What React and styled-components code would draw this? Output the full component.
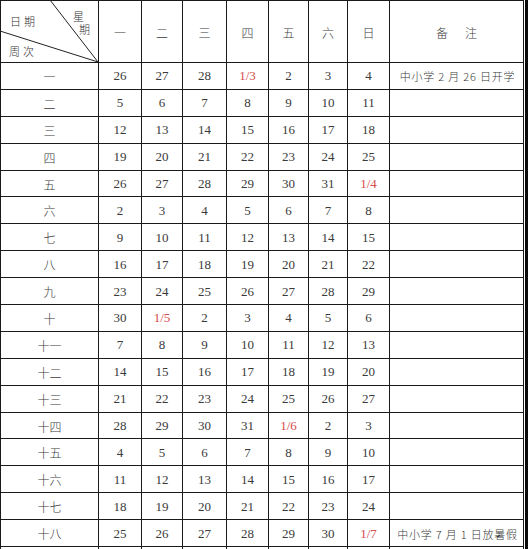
import React from "react";
import styled, { createGlobalStyle } from "styled-components";

const GlobalStyle = createGlobalStyle`
  html, body {
    margin: 0;
    padding: 0;
    background: #fff;
    overflow: hidden;
  }
`;

const Page = styled.div`
  display: flex;
  width: 528px;
  height: 549px;
  overflow: hidden;
`;

const Sheet = styled.div`
  display: grid;
  grid-template-columns: 98px 43px 41px 44px 42px 40px 39px 42px 134px;
  grid-template-rows: 62px;
  grid-auto-rows: 26.9px;
  border-left: 1px solid #1a1a1a;
  border-top: 1px solid #1a1a1a;
  align-self: flex-start;
`;

const Edge = styled.div`
  width: 3px;
  margin-left: 1px;
  background: #0a0a0a;
`;

const Cell = styled.div`
  box-sizing: border-box;
  border-right: 1px solid #1a1a1a;
  border-bottom: 1px solid #1a1a1a;
  display: flex;
  align-items: center;
  justify-content: center;
  font-family: ${({ $num }) =>
    $num
      ? '"Liberation Serif", "Noto Sans CJK SC", serif'
      : '"Noto Sans CJK SC", sans-serif'};
  font-size: ${({ $num }) => ($num ? "13px" : "12px")};
  font-weight: 300;
  color: ${({ $red }) => ($red ? "#d64b4b" : "#3a3a3a")};
  padding-top: 1px;
`;

const Note = styled(Cell)`
  font-family: "Noto Sans CJK SC", sans-serif;
  font-size: 11px;
  letter-spacing: 0.8px;
  white-space: pre;
  padding-left: 2px;
`;

const NoteHead = styled(Cell)`
  gap: 17px;
`;

const Corner = styled.div`
  position: relative;
  box-sizing: border-box;
  border-right: 1px solid #1a1a1a;
  border-bottom: 1px solid #1a1a1a;
  font-family: "Noto Sans CJK SC", sans-serif;
  font-size: 11px;
  font-weight: 300;
  color: #333;
`;

const Diagonals = styled.svg`
  position: absolute;
  left: 0;
  top: 0;
  overflow: visible;
`;

const CornerLabel = styled.span`
  position: absolute;
  left: ${({ $x }) => $x}px;
  top: ${({ $y }) => $y}px;
  letter-spacing: ${({ $spread }) => $spread || 0}px;
  line-height: 12px;
`;

const days = ["一", "二", "三", "四", "五", "六", "日"];

const weeks = [
  ["一", [26, 27, 28, "1/3", 2, 3, 4], "中小学 2 月 26 日开学"],
  ["二", [5, 6, 7, 8, 9, 10, 11]],
  ["三", [12, 13, 14, 15, 16, 17, 18]],
  ["四", [19, 20, 21, 22, 23, 24, 25]],
  ["五", [26, 27, 28, 29, 30, 31, "1/4"]],
  ["六", [2, 3, 4, 5, 6, 7, 8]],
  ["七", [9, 10, 11, 12, 13, 14, 15]],
  ["八", [16, 17, 18, 19, 20, 21, 22]],
  ["九", [23, 24, 25, 26, 27, 28, 29]],
  ["十", [30, "1/5", 2, 3, 4, 5, 6]],
  ["十一", [7, 8, 9, 10, 11, 12, 13]],
  ["十二", [14, 15, 16, 17, 18, 19, 20]],
  ["十三", [21, 22, 23, 24, 25, 26, 27]],
  ["十四", [28, 29, 30, 31, "1/6", 2, 3]],
  ["十五", [4, 5, 6, 7, 8, 9, 10]],
  ["十六", [11, 12, 13, 14, 15, 16, 17]],
  ["十七", [18, 19, 20, 21, 22, 23, 24]],
  ["十八", [25, 26, 27, 28, 29, 30, "1/7"], "中小学 7 月 1 日放暑假"],
  ["", ["", "", "", "", "", "", ""]],
];

export default function App() {
  return (
    <>
      <GlobalStyle />
      <Page>
        <Sheet>
          <Corner>
            <Diagonals width="98" height="62">
              <line x1="49" y1="-1" x2="97" y2="61" stroke="#222" strokeWidth="1" />
              <line x1="-1" y1="30" x2="97" y2="61" stroke="#222" strokeWidth="1" />
            </Diagonals>
            <CornerLabel $x={9} $y={14} $spread={3}>日期</CornerLabel>
            <CornerLabel $x={72} $y={9}>星</CornerLabel>
            <CornerLabel $x={78} $y={22}>期</CornerLabel>
            <CornerLabel $x={8} $y={44} $spread={3}>周次</CornerLabel>
          </Corner>
          {days.map((d) => (
            <Cell key={d}>{d}</Cell>
          ))}
          <NoteHead>
            <span>备</span>
            <span>注</span>
          </NoteHead>

          {weeks.map(([name, dates, note], i) => (
            <React.Fragment key={i}>
              <Cell>{name}</Cell>
              {dates.map((v, j) => (
                <Cell key={j} $num $red={typeof v === "string" && v.includes("/")}>
                  {v}
                </Cell>
              ))}
              <Note>{note || ""}</Note>
            </React.Fragment>
          ))}
        </Sheet>
        <Edge />
      </Page>
    </>
  );
}
